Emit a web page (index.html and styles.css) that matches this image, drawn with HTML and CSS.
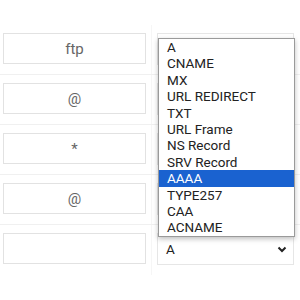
FILE: index.html
```html
<!DOCTYPE html>
<html lang="en">

<head>
    <meta charset="UTF-8">
    <meta name="viewport" content="width=device-width, initial-scale=1.0">
    <title>DNS Records</title>
    <link rel="stylesheet" href="styles.css">
</head>

<body>
    <div class="records">
        <div class="row">
            <div class="cell host"><div class="field">ftp</div></div>
            <div class="cell type"><div class="select"></div></div>
        </div>
        <div class="row">
            <div class="cell host"><div class="field">@</div></div>
            <div class="cell type"><div class="select"></div></div>
        </div>
        <div class="row">
            <div class="cell host"><div class="field">*</div></div>
            <div class="cell type"><div class="select"></div></div>
        </div>
        <div class="row">
            <div class="cell host"><div class="field">@</div></div>
            <div class="cell type"><div class="select"></div></div>
        </div>
        <div class="row">
            <div class="cell host"><div class="field"></div></div>
            <div class="cell type">
                <div class="select">
                    <span>A</span>
                    <svg class="chevron" width="10" height="7" viewBox="0 0 10 7">
                        <path d="M1.5 1.5 L5 5 L8.5 1.5" fill="none" stroke="#222" stroke-width="2"/>
                    </svg>
                </div>
            </div>
        </div>

        <!-- open list of the first type select -->
        <ul class="dropdown">
            <li>A</li>
            <li>CNAME</li>
            <li>MX</li>
            <li>URL REDIRECT</li>
            <li>TXT</li>
            <li>URL Frame</li>
            <li>NS Record</li>
            <li>SRV Record</li>
            <li class="active">AAAA</li>
            <li>TYPE257</li>
            <li>CAA</li>
            <li>ACNAME</li>
        </ul>
    </div>
</body>

</html>
```

FILE: styles.css
```css
body {
    margin: 0;
    background: #fff;
    font-family: Roboto, "Liberation Sans", sans-serif;
}

.records {
    position: relative;
    padding-top: 25px;
}

.row {
    display: flex;
    height: 50px;
    border-bottom: 1px solid #f0f0f0;
    box-sizing: border-box;
}

.row:last-of-type {
    border-bottom: none;
}

.cell {
    padding-top: 8px;
    box-sizing: border-box;
}

.host {
    width: 152px;
    padding-left: 3px;
    border-right: 1px solid #f6f6f6;
}

.type {
    flex: 1;
    padding-left: 5px;
}

.field {
    width: 143px;
    height: 31px;
    border: 1px solid #e2e2e2;
    box-sizing: border-box;
    display: flex;
    align-items: center;
    justify-content: center;
    font-size: 15px;
    color: #666;
}

.select {
    width: 137px;
    height: 32px;
    border: 1px solid #e6e6e6;
    box-sizing: border-box;
    display: flex;
    align-items: center;
    justify-content: space-between;
    padding: 0 6px 0 8px;
    font-size: 13.5px;
    color: #222;
}

.chevron {
    display: block;
}

.dropdown {
    position: absolute;
    left: 158px;
    top: 38px;
    width: 137px;
    margin: 0;
    padding: 0;
    list-style: none;
    background: #fff;
    border: 1px solid #9a9a9a;
    box-sizing: border-box;
    box-shadow: 0 2px 5px rgba(0, 0, 0, 0.25);
    font-size: 13.5px;
    color: #222;
}

.dropdown li {
    height: 16.4px;
    line-height: 16.4px;
    padding-left: 8px;
}

.dropdown li.active {
    background: #1a62d0;
    color: #fff;
}
```
